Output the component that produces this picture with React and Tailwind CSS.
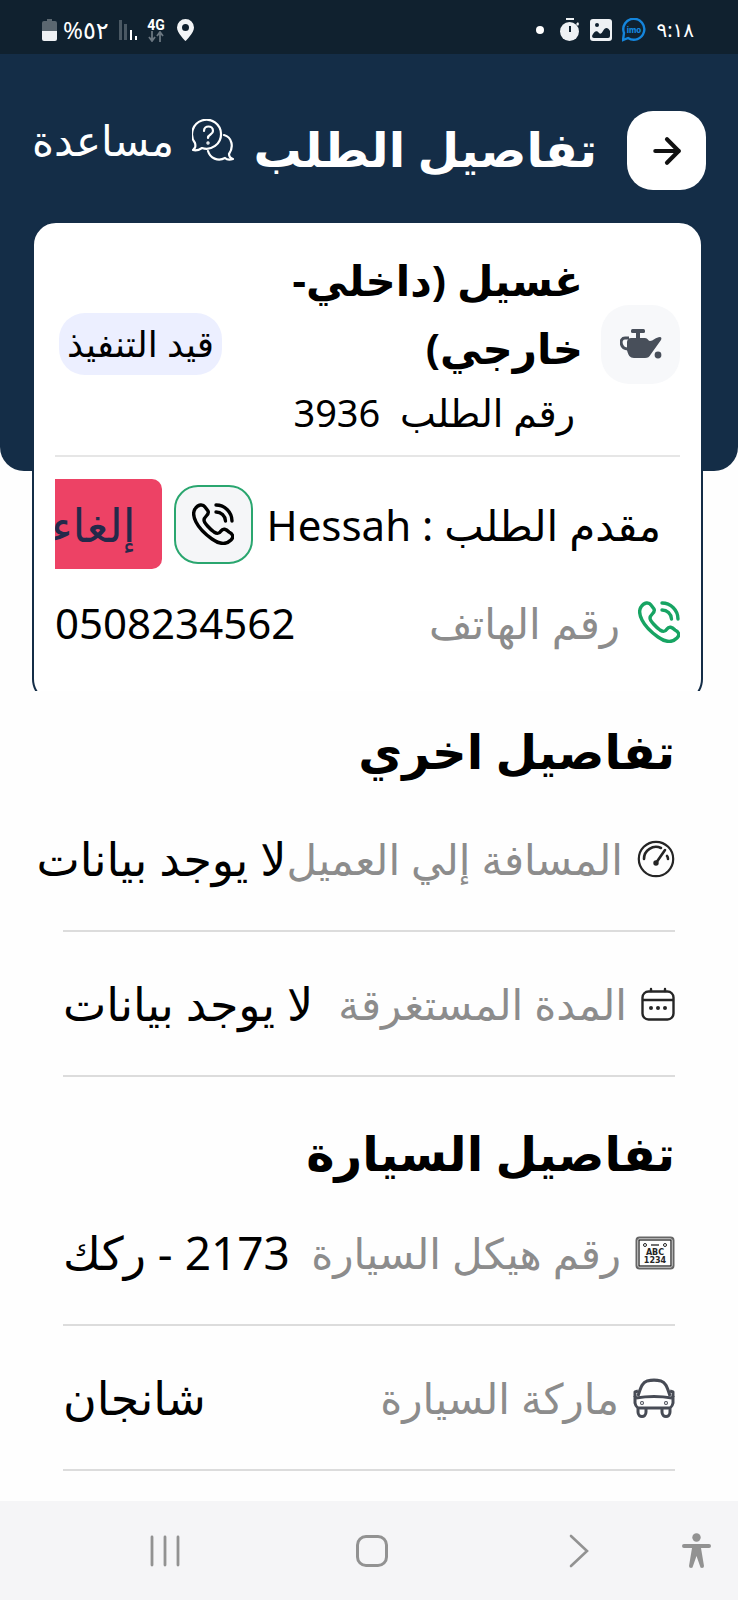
import React from "react";
import { ArrowRight } from "lucide-react";

function PhoneIcon({ className }) {
  return (
    <svg viewBox="0 0 42 42" className={className} fill="none" stroke="currentColor" strokeWidth="3.4" strokeLinecap="round" strokeLinejoin="round">
      <path d="M3 6C6 1 11 1 13 4L16 8C18 12 12 13 12 17C12 20 18 26 22 29C25 31 27 31 29 28C31 25 34 26 37 29C41 31 42 34 39 37C34 42 27 41 20 36C13 31 7 25 4 19C1 13 1 9 3 6Z" />
      <path d="M24 2A16 16 0 0 1 40 18" />
      <path d="M24 9A9.5 9.5 0 0 1 33.5 18" />
    </svg>
  );
}

function HelpIcon() {
  return (
    <svg viewBox="0 0 42 42" className="size-[42px]" fill="none" stroke="currentColor" strokeWidth="2.2" strokeLinecap="round" strokeLinejoin="round">
      <path d="M1 31C3 29 4 28 3 24A14.5 14.5 0 1 1 10 29C7 31 4 32 1 31Z" />
      <path d="M32 16C40 18 42 28 37 35C37 37 38 39 41 40C38 41 35 41 33 39C26 43 18 39 16 32" />
      <path d="M12 12C12 6 21 6 21 12C21 16 16 15 16 19" />
      <circle cx="16" cy="24" r="0.6" fill="currentColor" />
    </svg>
  );
}

function OilIcon() {
  return (
    <svg viewBox="0 0 42 32" className="h-8 w-[42px]" fill="#484f5a">
      <rect x="11" y="1" width="14" height="4" rx="1.5" />
      <path d="M16 3h4v8h-4z" />
      <path d="M11 10h14c3 0 3 3 5 3 3 0 6-4 10-4 1 0 2 1 1 3L31 26c-2 3-3 4-6 4H14c-4 0-6-3-7-8V14c0-2 2-4 4-4z" />
      <path d="M9 10H5c-6 0-5 11 3 11" fill="none" stroke="#484f5a" strokeWidth="3" />
      <circle cx="38" cy="27" r="3.4" />
    </svg>
  );
}

function GaugeIcon() {
  return (
    <svg viewBox="0 0 38 38" className="size-[38px]" fill="none" stroke="#252525" strokeWidth="2.2" strokeLinecap="round">
      <circle cx="19" cy="19" r="17.2" />
      <path d="M7 19A12 12 0 0 1 24 8" strokeWidth="2.6" />
      <path d="M30 16c1 1 1 2 1 3" strokeWidth="2.6" />
      <path d="M28 10L19 23" strokeWidth="2.6" />
      <circle cx="19" cy="23" r="1.6" fill="#252525" />
    </svg>
  );
}

function CalendarIcon() {
  return (
    <svg viewBox="0 0 34 34" className="size-[34px]" fill="none" stroke="#252525" strokeWidth="2.4" strokeLinecap="round">
      <rect x="1.5" y="4.5" width="31" height="28" rx="6" />
      <path d="M2 13h30M10 2v2M24 2v2" />
      <g fill="#252525" stroke="none">
        <circle cx="10" cy="21" r="2" />
        <circle cx="17" cy="21" r="2" />
        <circle cx="24" cy="21" r="2" />
      </g>
    </svg>
  );
}

function PlateIcon() {
  return (
    <svg viewBox="0 0 40 34" className="h-[34px] w-10" fill="none" stroke="#252525">
      <rect x="1.5" y="1.5" width="37" height="31" rx="3" stroke="#666" strokeWidth="2" />
      <rect x="4" y="4" width="32" height="26" strokeWidth="1.3" />
      <circle cx="10" cy="9" r="1.5" />
      <circle cx="30" cy="9" r="1.5" />
      <path d="M16 9h8" strokeWidth="1.3" />
      <g fill="#252525" stroke="none" fontFamily="DejaVu Sans" fontWeight="bold" fontSize="8" textAnchor="middle">
        <text x="20" y="19">ABC</text>
        <text x="20" y="27">1234</text>
      </g>
    </svg>
  );
}

function CarIcon() {
  return (
    <svg viewBox="0 0 42 40" className="h-10 w-[42px]" fill="none" stroke="#474b55" strokeWidth="3" strokeLinejoin="round">
      <path d="M5 18C8 8 10 4 14 3C18 2 24 2 28 3C32 4 34 8 37 18" />
      <path d="M5 13L2 14V19M37 13L40 14V19" />
      <path d="M2 18V25C3 29 4 30 7 30H35C38 30 39 29 40 25V18" />
      <path d="M3 20C15 18 27 18 39 20" />
      <path d="M5 30V34C5 40 13 40 13 34V31M29 31V34C29 40 37 40 37 34V30" />
      <circle cx="9" cy="25" r="0.5" />
      <circle cx="33" cy="25" r="0.5" />
    </svg>
  );
}

function StatusBar() {
  return (
    <div dir="ltr" className="flex h-[54px] items-center bg-[#10212f] pt-1.5 pr-11 pl-[42px] text-white">
      <svg viewBox="0 0 15 22" className="mr-1.5 h-[22px] w-[15px]">
        <path d="M5 0h5v2h3q2 0 2 2v8H0V4q0-2 2-2h3z" fill="#5b6770" />
        <path d="M0 12h15v8q0 2-2 2H2q-2 0-2-2z" fill="#eef1f4" />
      </svg>
      <span className="w-[44px] text-2xl whitespace-nowrap">%٥٢</span>
      <svg viewBox="0 0 18 20" className="ml-3 h-5 w-[18px]">
        <path d="M0 0h3v20H0zM5 4h3v16H5z" fill="#4a5863" />
        <path d="M11 10h2v10h-2zM16 16h2v4h-2z" fill="#fff" />
      </svg>
      <div className="ml-2.5 flex w-[18px] flex-col items-center">
        <span className="font-['Roboto',sans-serif] text-sm leading-3 font-bold">4G</span>
        <svg viewBox="0 0 16 11" className="h-[11px] w-4" fill="none" stroke="#6a7680" strokeWidth="1.8">
          <path d="M4 0v9M1 6l3 4 3-4M12 11V2M9 5l3-4 3 4" />
        </svg>
      </div>
      <svg viewBox="0 0 17 22" className="ml-3 h-[22px] w-[17px]" fill="#f3f5f7" fillRule="evenodd">
        <path d="M8.5 0a8.5 8.5 0 0 0-8.5 8.5C0 14 8.5 22 8.5 22S17 14 17 8.5A8.5 8.5 0 0 0 8.5 0zm0 5a3.5 3.5 0 1 1 0 7 3.5 3.5 0 0 1 0-7z" />
      </svg>
      <div className="ml-auto flex items-center">
        <span className="mr-4 size-2 rounded-full bg-white" />
        <svg viewBox="0 0 20 24" className="mr-2.5 h-6 w-5" fill="#eef1f4">
          <path d="M6 0h8v2H6zM16 6l2-2 1 2-1 2z" />
          <circle cx="9.5" cy="13.5" r="9.5" />
          <path d="M9 8h2v6H9z" fill="#10212f" />
        </svg>
        <svg viewBox="0 0 22 22" className="mr-2.5 size-[22px]">
          <rect width="22" height="22" rx="3" fill="#eef1f4" />
          <circle cx="7" cy="6" r="2" fill="#10212f" />
          <path d="M2 17C4 12 7 11 9 14Q11 16 13 12C15 8 18 8 20 12V17Q20 19 18 19H4Q2 19 2 17Z" fill="#10212f" />
        </svg>
        <svg viewBox="0 0 24 24" className="mr-2.5 size-6" fill="none" stroke="#1485dc" strokeWidth="2.4">
          <path d="M2 15A10.5 10.5 0 1 1 6 20L1 22Z" />
          <text x="12" y="15" fill="#1485dc" stroke="none" fontFamily="Inter" fontWeight="800" fontSize="8" textAnchor="middle">imo</text>
        </svg>
        <time className="text-xl">٩:١٨</time>
      </div>
    </div>
  );
}

const otherDetails = [
  { label: "المسافة إلي العميل", value: "لا يوجد بيانات", icon: <GaugeIcon /> },
  { label: "المدة المستغرقة", value: "لا يوجد بيانات", icon: <CalendarIcon /> },
];

const carDetails = [
  { label: "رقم هيكل السيارة", value: "2173 - ركك", icon: <PlateIcon /> },
  { label: "ماركة السيارة", value: "شانجان", icon: <CarIcon /> },
];

function DetailRow({ icon, label, value }) {
  return (
    <div className="flex h-[145px] items-center justify-between border-b-2 border-[#dcdcdc] whitespace-nowrap">
      <dt className="flex shrink-0 items-center gap-3.5 text-[42px] text-[#8c8c8c]">
        {icon}
        {label}
      </dt>
      <dd className="shrink-0 text-[46px] text-black">{value}</dd>
    </div>
  );
}

function NavBar() {
  return (
    <nav dir="ltr" className="flex h-[99px] items-center bg-[#f5f5f7] pr-[27px] pl-[62px] text-[#929292]">
      <button type="button" aria-label="Recents" className="flex flex-1 justify-center">
        <svg viewBox="0 0 30 32" className="h-8 w-[30px]" stroke="currentColor" strokeWidth="2.8" strokeLinecap="round">
          <path d="M2 2v28M15 2v28M28 2v28" />
        </svg>
      </button>
      <button type="button" aria-label="Home" className="flex flex-1 justify-center">
        <span className="size-8 rounded-[10px] border-[3px] border-[#929292]" />
      </button>
      <button type="button" aria-label="Back" className="flex flex-1 justify-center">
        <svg viewBox="0 0 20 34" className="h-[34px] w-5" fill="none" stroke="currentColor" strokeWidth="2.6" strokeLinecap="round">
          <path d="M2 2l16 15L2 32" />
        </svg>
      </button>
      <button type="button" aria-label="Accessibility">
        <svg viewBox="0 0 29 35" className="h-[35px] w-[29px]" fill="currentColor">
          <circle cx="14.5" cy="4.5" r="4.2" />
          <path d="M2 11h25q2 0 2 2t-2 2h-8l3 18q0 2-2 2t-2-2l-3.5-10-3.5 10q0 2-2 2t-2-2l3-18H2q-2 0-2-2t2-2z" />
        </svg>
      </button>
    </nav>
  );
}

function App() {
  return (
    <div
      dir="rtl"
      className="flex min-h-screen flex-col overflow-x-hidden bg-[#fefefe] font-['Noto_Sans','DejaVu_Sans',sans-serif] text-black"
    >
      <StatusBar />

      {/* Header */}
      <header className="flex h-[417px] items-start rounded-b-3xl bg-[#142d47] pt-[57px] pr-8 pl-8 whitespace-nowrap text-white">
        <button type="button" aria-label="رجوع" className="flex size-[79px] shrink-0 items-center justify-center rounded-[26px] bg-white text-[#111]">
          <ArrowRight className="size-10" strokeWidth={2.5} />
        </button>
        <h1 className="mr-[30px] text-[48px] leading-[76px] font-bold">تفاصيل الطلب</h1>
        <a href="#help" className="mr-auto flex items-center gap-[18px] text-[42px] leading-[58px]">
          <HelpIcon />
          مساعدة
        </a>
      </header>

      {/* Order card */}
      <div className="-mt-[250px] overflow-hidden pr-[35px] pl-8">
        <section className="-mb-3 rounded-3xl border-2 border-[#142d47] bg-white px-[21px] pb-[34px]">
          <div className="flex items-center border-b-2 border-[#e6e6e6] pt-[23px] pb-[13px]">
            <div className="flex size-[79px] shrink-0 items-center justify-center rounded-[28px] bg-[#f7f8fa]">
              <OilIcon />
            </div>
            <div className="mr-[18px] w-[300px]">
              <h2 className="text-[42px] leading-[68px] font-bold">غسيل (داخلي-خارجي)</h2>
              <p className="pr-2 text-[38px] leading-[60px] whitespace-pre">رقم الطلب  3936</p>
            </div>
            <span className="mr-auto ml-1 rounded-[26px] bg-[#ecefff] px-2 text-[36px] leading-[62px] whitespace-nowrap">
              قيد التنفيذ
            </span>
          </div>

          <div className="mt-[22px] flex items-center overflow-hidden pr-[19px] whitespace-nowrap">
            <p className="shrink-0 text-[42px]">مقدم الطلب : Hessah</p>
            <button type="button" aria-label="اتصال" className="mr-3.5 flex size-[79px] shrink-0 items-center justify-center rounded-3xl border-2 border-[#2aa66f] bg-[#f5f6f8]">
              <PhoneIcon className="size-[42px]" />
            </button>
            <button type="button" className="mr-3 h-[90px] shrink-0 rounded-[10px] bg-[#ed4265] px-[26px] text-[46px] text-[#24294a]">
              إلغاء
            </button>
          </div>

          <div className="mt-2 flex h-[90px] items-center justify-between whitespace-nowrap">
            <div className="flex items-center gap-[18px] text-[42px] text-[#8c8c8c]">
              <PhoneIcon className="size-[42px] text-[#17a463]" />
              رقم الهاتف
            </div>
            <span className="text-[42px]">0508234562</span>
          </div>
        </section>
      </div>

      {/* Details */}
      <main className="flex-1 pr-[63px] pl-[63px]">
        <section>
          <h2 className="pt-6 text-[48px] leading-[72px] font-bold">تفاصيل اخري</h2>
          <dl>
            {otherDetails.map((row) => (
              <DetailRow key={row.label} {...row} />
            ))}
          </dl>
        </section>
        <section>
          <h2 className="pt-12 text-[48px] leading-[56px] font-bold">تفاصيل السيارة</h2>
          <dl>
            {carDetails.map((row) => (
              <DetailRow key={row.label} {...row} />
            ))}
          </dl>
        </section>
      </main>

      <NavBar />
    </div>
  );
}

export default App;
